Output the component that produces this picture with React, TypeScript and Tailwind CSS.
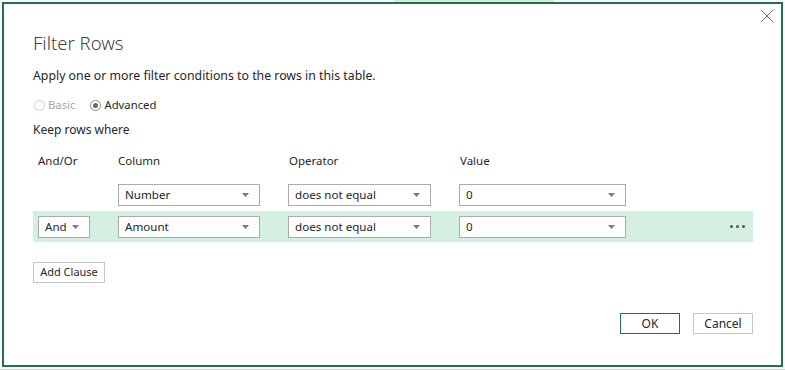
import React from "react";
import { X } from "lucide-react";

const font = { fontFamily: '"Noto Sans", "Open Sans", sans-serif' };

const Caret = () => (
  <svg width="7" height="4" viewBox="0 0 7 4" className="shrink-0">
    <path d="M0 0 L7 0 L3.5 4 Z" fill="#7a7a7a" />
  </svg>
);

const Dropdown = ({ value, width }: { value: string; width: string }) => (
  <div
    className={`${width} h-[22px] flex items-center justify-between border border-[#ababab] bg-white pl-[6px] pr-[10px] text-[11.6px] text-[#262626]`}
  >
    <span>{value}</span>
    <Caret />
  </div>
);

const Radio = ({ checked, disabled, label }: { checked?: boolean; disabled?: boolean; label: string }) => (
  <div className="flex items-center gap-[3px]">
    <span
      className={`w-[11px] h-[11px] rounded-full border flex items-center justify-center ${
        disabled ? "border-[#cfcfcf]" : "border-[#8a8a8a]"
      }`}
    >
      {checked && <span className="w-[5px] h-[5px] rounded-full bg-[#6a6a6a]" />}
    </span>
    <span className={disabled ? "text-[#a6a6a6]" : "text-[#262626]"}>{label}</span>
  </div>
);

const App = () => {
  return (
    <div className="w-[785px] h-[370px] bg-white overflow-hidden flex flex-col" style={font}>
      {/* sliver of the sheet behind */}
      <div className="h-[2px] flex shrink-0">
        <div className="w-[394px]" />
        <div className="w-[160px] bg-[#d3eadd]" />
      </div>

      <div className="flex-1 flex px-[2px]">
        <div className="flex-1 border-2 border-[#217346] bg-white flex flex-col pl-[29px] pr-[28px]">
          <div className="flex justify-end -mr-[26px] h-[24px]">
            <X size={24} strokeWidth={1} color="#6f6f6f" />
          </div>

          <h1 className="text-[18.5px] font-light text-[#444] leading-[28px] mt-[1px]">Filter Rows</h1>
          <p className="text-[12.3px] text-[#262626] leading-[18px] mt-[10px]">
            Apply one or more filter conditions to the rows in this table.
          </p>

          <div className="flex gap-[15px] text-[11.3px] mt-[12px] pl-[1px] leading-[16px]">
            <Radio disabled label="Basic" />
            <Radio checked label="Advanced" />
          </div>

          <div className="text-[12px] text-[#262626] mt-[9px] leading-[16px]">Keep rows where</div>

          {/* headers */}
          <div className="flex text-[11.5px] text-[#262626] mt-[15px] pl-[5px] leading-[16px]">
            <div className="w-[80px]">And/Or</div>
            <div className="w-[171px]">Column</div>
            <div className="w-[171px]">Operator</div>
            <div>Value</div>
          </div>

          <div className="flex items-center mt-[15px] h-[22px] pl-[5px]">
            <div className="w-[80px]" />
            <div className="w-[170px]">
              <Dropdown value="Number" width="w-[142px]" />
            </div>
            <div className="w-[171px]">
              <Dropdown value="does not equal" width="w-[143px]" />
            </div>
            <Dropdown value="0" width="w-[167px]" />
          </div>

          <div className="flex items-center mt-[5px] h-[31px] pl-[5px] bg-[#d5efe0]">
            <div className="w-[80px]">
              <Dropdown value="And" width="w-[52px]" />
            </div>
            <div className="w-[170px]">
              <Dropdown value="Amount" width="w-[142px]" />
            </div>
            <div className="w-[171px]">
              <Dropdown value="does not equal" width="w-[143px]" />
            </div>
            <Dropdown value="0" width="w-[167px]" />
            <div className="flex-1 flex justify-end pr-[8px] gap-[3px]">
              <span className="w-[3px] h-[3px] rounded-full bg-[#555]" />
              <span className="w-[3px] h-[3px] rounded-full bg-[#555]" />
              <span className="w-[3px] h-[3px] rounded-full bg-[#555]" />
            </div>
          </div>

          <div className="flex mt-[20px]">
            <button className="w-[72px] h-[21px] border border-[#c6c6c6] bg-white text-[11px] text-[#262626]">
              Add Clause
            </button>
          </div>

          <div className="flex justify-end gap-[13px] mt-[30px]">
            <button className="w-[60px] h-[21px] border border-[#217346] bg-white text-[12px] text-[#262626]">
              OK
            </button>
            <button className="w-[60px] h-[21px] border border-[#c6c6c6] bg-white text-[12px] text-[#262626]">
              Cancel
            </button>
          </div>
        </div>
      </div>

      {/* sheet gridline below */}
      <div className="h-[3px] shrink-0 border-b border-[#d4d4d4]" />
    </div>
  );
};

export default App;
